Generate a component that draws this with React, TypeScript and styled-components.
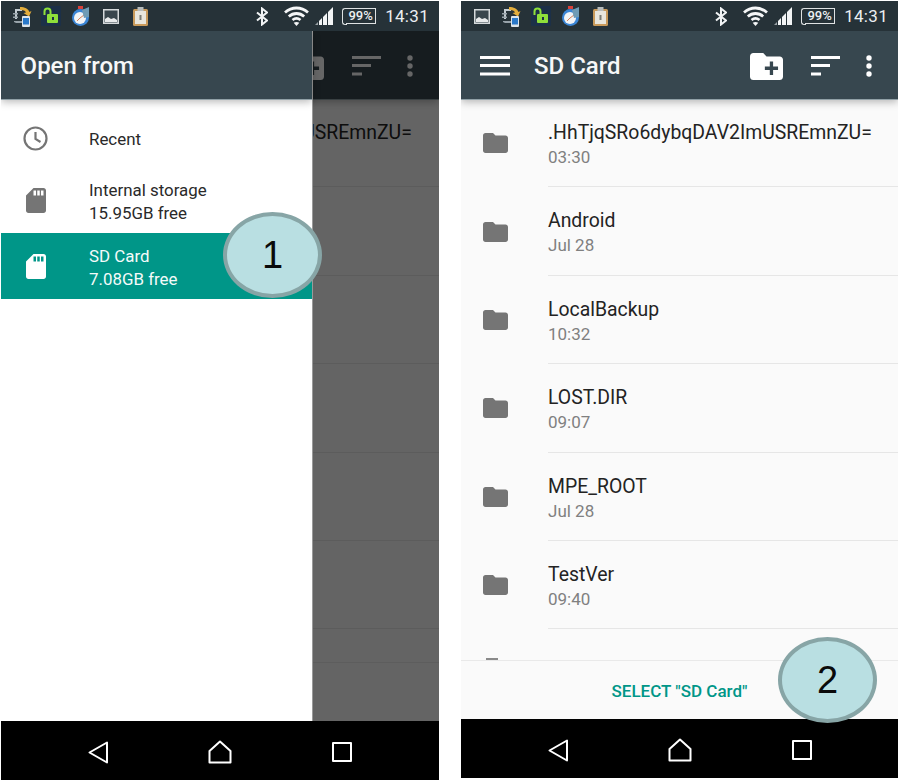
import React from "react";
import styled, { createGlobalStyle } from "styled-components";

const GlobalStyle = createGlobalStyle`
  html, body {
    margin: 0;
    background: #fff;
    font-family: Roboto, "Liberation Sans", sans-serif;
  }
  * { box-sizing: border-box; }
`;

const Page = styled.div`
  display: flex;
  gap: 22px;
  width: 899px;
  height: 781px;
  padding: 1px 0 0 1px;
  overflow: hidden;
  align-items: flex-start;
`;

const Phone = styled.div<{ $width: number; $height: number }>`
  position: relative;
  display: flex;
  flex-direction: column;
  flex: none;
  width: ${(p) => p.$width}px;
  height: ${(p) => p.$height}px;
`;

const StatusBar = styled.div`
  display: flex;
  align-items: center;
  flex: none;
  height: 30px;
  padding: 0 10px 0 6px;
  background: #263238;
`;

const NotifySlot = styled.div`
  display: flex;
  justify-content: center;
  width: 29.6px;
`;

const StatusRight = styled.div`
  display: flex;
  align-items: center;
  gap: 8px;
  margin-left: auto;
  svg + svg {
    margin-left: -2px;
  }
`;

const Battery = styled.div`
  position: relative;
  width: 30px;
  height: 16px;
  margin-left: 5px;
  border: 1.5px solid #dfe2e3;
  border-left: none;
  color: #eceff1;
  font-size: 13px;
  line-height: 13px;
  text-align: center;
  font-weight: 500;
  &::before {
    content: "";
    position: absolute;
    left: -4px;
    top: -1.5px;
    bottom: -1.5px;
    width: 4px;
    border: 1.5px solid #dfe2e3;
    border-right: none;
    border-radius: 3px 0 0 3px;
  }
`;

const Clock = styled.div`
  margin-left: 1px;
  color: #eceff1;
  font-size: 17px;
  letter-spacing: 0.3px;
`;

const Screen = styled.div`
  position: relative;
  display: flex;
  flex-direction: column;
  flex: 1;
  min-height: 0;
  overflow: hidden;
  background: #fafafa;
`;

const Toolbar = styled.div`
  position: relative;
  z-index: 1;
  display: flex;
  align-items: center;
  flex: none;
  height: 68px;
  padding: 2px 26px 0 19px;
  background: #37474f;
  box-shadow: 0 1px 0 #90a0a6, 0 3px 8px rgba(0, 0, 0, 0.28);
  color: #fff;
`;

const Title = styled.div<{ $inset: number }>`
  flex: 1;
  margin-left: ${(p) => p.$inset}px;
  font-size: 24px;
  font-weight: 500;
  white-space: nowrap;
  color: #f7f8f8;
`;

const ToolbarActions = styled.div`
  display: flex;
  align-items: center;
  gap: 26px;
  svg:first-child {
    margin-right: 2px;
  }
`;

const FileList = styled.div`
  flex: 1;
  min-height: 0;
  overflow: hidden;
`;

const FileRow = styled.div`
  display: flex;
  align-items: center;
  height: 88.4px;
  padding-left: 22px;
`;

const FileIcon = styled.svg`
  flex: none;
  width: 25px;
  height: 20px;
  margin-right: 40px;
  fill: #757575;
`;

const FileText = styled.div`
  flex: 1;
  align-self: stretch;
  padding-top: 21px;
  border-bottom: 1.5px solid #e6e6e6;
`;

const FileName = styled.div`
  font-size: 19.4px;
  line-height: 26px;
  color: #232323;
  white-space: nowrap;
`;

const FileDate = styled.div`
  margin-top: -1px;
  font-size: 17px;
  line-height: 24px;
  color: #808080;
`;

const PeekingFolder = styled.div`
  width: 12px;
  height: 1.5px;
  margin: 29px 0 0 25px;
  background: #8a8a8a;
`;

const Footer = styled.div`
  display: flex;
  align-items: center;
  justify-content: center;
  flex: none;
  height: 59px;
  padding-top: 2px;
  border-top: 1.5px solid #e9e9e9;
  background: #fafafa;
  color: #009688;
  font-size: 17px;
  font-weight: 500;
`;

const Scrim = styled.div`
  position: absolute;
  inset: 0;
  z-index: 2;
  background: rgba(0, 0, 0, 0.6);
`;

const Drawer = styled.div`
  position: absolute;
  top: 0;
  bottom: 0;
  left: 0;
  z-index: 3;
  display: flex;
  flex-direction: column;
  width: 312px;
  background: #fff;
  border-right: 1px solid #9a9a9a;
`;

const Roots = styled.div`
  padding-top: 2.3px;
`;

const RootRow = styled.div<{ $active?: boolean; $single?: boolean }>`
  display: flex;
  align-items: center;
  height: 66px;
  padding: ${(p) => (p.$single ? "9px" : "1px")} 0 0 22px;
  background: ${(p) => (p.$active ? "#009688" : "transparent")};
  color: ${(p) => (p.$active ? "#f4fbfa" : "#2a2a2a")};
`;

const RootIcon = styled.div`
  display: flex;
  justify-content: center;
  flex: none;
  width: 25px;
  margin-right: 41px;
`;

const RootText = styled.div`
  margin-top: 2px;
  font-size: 16.9px;
  line-height: 23px;
  white-space: nowrap;
`;

const NavBar = styled.div`
  display: flex;
  align-items: center;
  gap: 100px;
  flex: none;
  height: 59px;
  padding: 3px 0 0 87px;
  background: #000;
`;

const Bubble = styled.div<{ $left: number; $top: number }>`
  position: absolute;
  left: ${(p) => p.$left}px;
  top: ${(p) => p.$top}px;
  z-index: 5;
  display: flex;
  align-items: center;
  justify-content: center;
  width: 99px;
  height: 86px;
  border: 4px solid #87a5a6;
  border-radius: 50%;
  background: #b9dfe2;
  color: #0a0a0a;
  font-family: "Liberation Sans", Arial, sans-serif;
  font-size: 38px;
`;

const BluetoothSlot = styled.div`
  display: flex;
  margin-right: 8px;
`;

const SyncIcon = () => (
  <svg width="20" height="21" viewBox="0 0 20 21">
    <path d="M3 3h7v2H5v8H3z" fill="#c3ccd2" />
    <path d="M1 7h5v1.500H1zM1 10.500h5V12H1zM2 15h8v2H4l-2-1z" fill="#98a3aa" />
    <path d="M8 1c5 0 8 1.500 9.500 5l2-1-2.500 5.500L11.500 7l2.500-.6C13 4.500 11 3.800 8 4z" fill="#e3ad3b" />
    <rect x="10" y="10" width="8" height="11" rx="1" fill="#dde5ea" />
    <rect x="11" y="12" width="6" height="6.500" fill="#2a79c9" />
  </svg>
);

const LockIcon = () => (
  <svg width="20" height="20" viewBox="0 0 20 20">
    <rect width="20" height="20" rx="1" fill="#1c3048" />
    <path d="M3.500 9V5.500a3 3 0 0 1 6 0V8" fill="none" stroke="#8fe03a" strokeWidth="2" />
    <rect x="6" y="8" width="11" height="9" rx="1" fill="#8fe03a" />
    <rect x="11" y="11" width="2" height="3" fill="#1c3048" />
  </svg>
);

const TimerIcon = () => (
  <svg width="18" height="20" viewBox="0 0 18 20">
    <rect x="6" y="0" width="5" height="3" fill="#d9423a" />
    <circle cx="8.500" cy="11.500" r="8.500" fill="#3b86d6" />
    <circle cx="8" cy="12" r="6" fill="#f2f4f6" />
    <path d="M8 12l4-3M8 12l-3 3" stroke="#d9825a" strokeWidth="1" />
    <path d="M10 4l7-3v10l-5 1z" fill="#6f9bb5" />
  </svg>
);

const ImageIcon = () => (
  <svg width="16" height="15" viewBox="0 0 16 15">
    <rect x="0.750" y="0.750" width="14.500" height="13.500" fill="#39464d" stroke="#d5d9db" strokeWidth="1.500" />
    <path d="M2 13V10l3-2 3 2 3-1 3 2v2z" fill="#e8eaeb" />
  </svg>
);

const ClipboardIcon = () => (
  <svg width="15" height="19" viewBox="0 0 15 19">
    <rect x="0" y="2" width="15" height="17" rx="1.500" fill="#c99a5a" />
    <rect x="2" y="4" width="11" height="13" fill="#e9e6dc" />
    <rect x="4.500" y="0" width="6" height="4" fill="#b8bcbc" />
    <rect x="6.500" y="8" width="2" height="5" fill="#7d7d75" />
  </svg>
);

const BluetoothIcon = () => (
  <svg width="12" height="19" viewBox="0 0 12 18" fill="none" stroke="#f2f4f5" strokeWidth="2">
    <path d="M1 5l10 8-5 4V1l5 4-10 8" />
  </svg>
);

const WifiIcon = () => (
  <svg width="25" height="20" viewBox="0 0 25 20" fill="none" stroke="#f5f6f7" strokeWidth="2.800">
    <path d="M1 6.500c6.800-6 16.200-6 23 0" />
    <path d="M4.800 10.500c4.500-4 10.900-4 15.400 0" />
    <path d="M8.500 14c2.500-2 5.500-2 8 0" />
    <path d="M12.500 20l-2.800-3.300c1.700-.9 3.900-.9 5.600 0z" fill="#f5f6f7" stroke="none" />
  </svg>
);

const SignalIcon = () => (
  <svg width="18" height="18" viewBox="0 0 18 18" fill="#f2f4f5">
    <path d="M0 18l3-3v3z" fill="#9aa2a6" />
    <path d="M4 14l3-3v7H4z" />
    <path d="M8 10l4-4v12H8z" />
    <path d="M13 5l5-5v18h-5z" />
  </svg>
);

const FolderAddIcon = () => (
  <svg width="33" height="27" viewBox="2 4 20 16" fill="#fff" preserveAspectRatio="none">
    <path d="M20 6h-8l-2-2H4c-1.110 0-1.990.89-1.990 2L2 18c0 1.110.89 2 2 2h16c1.110 0 2-.89 2-2V8c0-1.110-.89-2-2-2zm-1 8h-3v3h-2v-3h-3v-2h3V9h2v3h3v2z" />
  </svg>
);

const HamburgerIcon = () => (
  <svg width="30" height="20" viewBox="0 0 30 20" fill="#fff">
    <rect y="0" width="30" height="3" />
    <rect y="8" width="30" height="3" />
    <rect y="16.500" width="30" height="3" />
  </svg>
);

const SortIcon = () => (
  <svg width="29" height="20" viewBox="0 0 29 20" fill="#fff">
    <rect y="0" width="29" height="3" />
    <rect y="8" width="19" height="3" />
    <rect y="16.500" width="10" height="3" />
  </svg>
);

const MoreIcon = () => (
  <svg width="6" height="22" viewBox="0 0 6 22" fill="#fff">
    <circle cx="3" cy="3" r="2.700" />
    <circle cx="3" cy="11" r="2.700" />
    <circle cx="3" cy="19" r="2.700" />
  </svg>
);

const ClockIcon = () => (
  <svg width="25" height="25" viewBox="0 0 25 25" fill="none" stroke="#757575" strokeWidth="2.200">
    <circle cx="12.500" cy="12.500" r="11" />
    <path d="M12.500 6v7l5 3" />
  </svg>
);

const SdIcon = ({ color }: { color: string }) => (
  <svg width="20" height="25" viewBox="4 2 16 20" fill={color}>
    <path d="M18 2h-8L4.020 8 4 20c0 1.100.9 2 2 2h12c1.100 0 2-.9 2-2V4c0-1.100-.9-2-2-2zm-6 6h-2V4h2v4zm3 0h-2V4h2v4zm3 0h-2V4h2v4z" />
  </svg>
);

const BackIcon = () => (
  <svg width="20" height="23" viewBox="0 0 20 23" fill="none" stroke="#fff" strokeWidth="2" strokeLinejoin="round">
    <path d="M19 1.500v20L1.500 11.500z" />
  </svg>
);

const HomeIcon = () => (
  <svg width="24" height="24" viewBox="0 0 24 24" fill="none" stroke="#fff" strokeWidth="2" strokeLinejoin="round">
    <path d="M1.500 11L12 1.500 22.500 11v11.500h-21z" />
  </svg>
);

const RecentsIcon = () => (
  <svg width="20" height="20" viewBox="0 0 20 20" fill="none" stroke="#fff" strokeWidth="2" strokeLinejoin="round">
    <rect x="1" y="1" width="18" height="18" />
  </svg>
);

const files = [
  { name: ".HhTjqSRo6dybqDAV2ImUSREmnZU=", date: "03:30" },
  { name: "Android", date: "Jul 28" },
  { name: "LocalBackup", date: "10:32" },
  { name: "LOST.DIR", date: "09:07" },
  { name: "MPE_ROOT", date: "Jul 28" },
  { name: "TestVer", date: "09:40" },
];

const Status = ({ icons }: { icons: React.ReactNode[] }) => (
  <StatusBar>
    {icons.map((icon, i) => (
      <NotifySlot key={i}>{icon}</NotifySlot>
    ))}
    <StatusRight>
      <BluetoothSlot>
        <BluetoothIcon />
      </BluetoothSlot>
      <WifiIcon />
      <SignalIcon />
      <Battery>99%</Battery>
      <Clock>14:31</Clock>
    </StatusRight>
  </StatusBar>
);

const FolderScreen = () => (
  <>
    <Toolbar>
      <HamburgerIcon />
      <Title $inset={24}>SD Card</Title>
      <ToolbarActions>
        <FolderAddIcon />
        <SortIcon />
        <MoreIcon />
      </ToolbarActions>
    </Toolbar>
    <FileList>
      {files.map((f) => (
        <FileRow key={f.name}>
          <FileIcon viewBox="2 4 20 16" preserveAspectRatio="none">
            <path d="M10 4H4c-1.100 0-2 .9-2 2v12c0 1.100.9 2 2 2h16c1.100 0 2-.9 2-2V8c0-1.100-.9-2-2-2h-8l-2-2z" />
          </FileIcon>
          <FileText>
            <FileName>{f.name}</FileName>
            <FileDate>{f.date}</FileDate>
          </FileText>
        </FileRow>
      ))}
      <PeekingFolder />
    </FileList>
    <Footer>SELECT "SD Card"</Footer>
  </>
);

const Nav = () => (
  <NavBar>
    <BackIcon />
    <HomeIcon />
    <RecentsIcon />
  </NavBar>
);

export default function App() {
  return (
    <>
      <GlobalStyle />
      <Page>
        <Phone $width={438} $height={779}>
          <Status icons={[<SyncIcon />, <LockIcon />, <TimerIcon />, <ImageIcon />, <ClipboardIcon />]} />
          <Screen>
            <FolderScreen />
            <Scrim />
            <Drawer>
              <Toolbar>
                <Title $inset={0.6}>Open from</Title>
              </Toolbar>
              <Roots>
                <RootRow $single>
                  <RootIcon>
                    <ClockIcon />
                  </RootIcon>
                  <RootText>Recent</RootText>
                </RootRow>
                <RootRow>
                  <RootIcon>
                    <SdIcon color="#757575" />
                  </RootIcon>
                  <RootText>
                    Internal storage
                    <br />
                    15.95GB free
                  </RootText>
                </RootRow>
                <RootRow $active>
                  <RootIcon>
                    <SdIcon color="#fff" />
                  </RootIcon>
                  <RootText>
                    SD Card
                    <br />
                    7.08GB free
                  </RootText>
                </RootRow>
              </Roots>
            </Drawer>
          </Screen>
          <Nav />
          <Bubble $left={222} $top={211}>1</Bubble>
        </Phone>
        <Phone $width={437} $height={777}>
          <Status icons={[<ImageIcon />, <SyncIcon />, <LockIcon />, <TimerIcon />, <ClipboardIcon />]} />
          <Screen>
            <FolderScreen />
          </Screen>
          <Nav />
          <Bubble $left={317} $top={636}>2</Bubble>
        </Phone>
      </Page>
    </>
  );
}
